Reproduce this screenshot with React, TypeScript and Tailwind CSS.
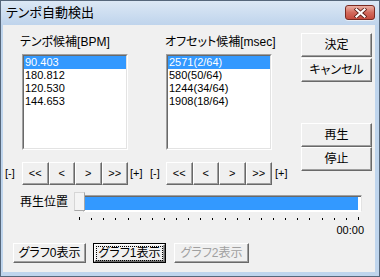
import React from "react";

const Btn = ({
  children,
  className = "",
  disabled = false,
}: {
  children: React.ReactNode;
  className?: string;
  disabled?: boolean;
}) => (
  <div
    className={`flex items-center justify-center bg-[#f0f0f0] border border-t-white border-l-white border-r-[#696969] border-b-[#696969] shadow-[inset_-1px_-1px_0_#a0a0a0] ${
      disabled ? "text-[#a0a0a0]" : "text-black"
    } ${className}`}>
    {children}
  </div>
);

const ListBox = ({ items }: { items: string[] }) => (
  <div className="w-[106px] h-[96px] border border-t-[#a0a0a0] border-l-[#a0a0a0] border-r-white border-b-white">
    <div className="w-full h-full bg-white border border-t-[#696969] border-l-[#696969] border-r-[#e3e3e3] border-b-[#e3e3e3] text-[11px]">
      {items.map((it, i) => (
        <div
          key={it}
          className={`h-[13px] leading-[13px] pl-[1px] ${
            i === 0 ? "bg-[#3399ff] text-white" : "text-black"
          }`}>
          {it}
        </div>
      ))}
    </div>
  </div>
);

const NavGroup = () => (
  <div className="grid grid-cols-4 w-[106px] h-[23px] text-[11px]">
    <Btn>&lt;&lt;</Btn>
    <Btn>&lt;</Btn>
    <Btn>&gt;</Btn>
    <Btn>&gt;&gt;</Btn>
  </div>
);

export default function App() {
  const ticks = Array.from({ length: 24 }, (_, i) => i);

  return (
    <div className="w-[380px] h-[277px] flex flex-col border border-[#56677b] bg-[#bfd5ed] text-black overflow-hidden font-['Liberation_Sans','Noto_Sans_CJK_JP',sans-serif] [font-feature-settings:'palt']">
      {/* title bar */}
      <div className="h-[24px] flex items-start justify-between pl-[5px] pr-[4px] bg-linear-to-b from-[#dce8f5] to-[#bfd4ec]">
        <span className="mt-[4px] text-[13px] leading-[16px]">テンポ自動検出</span>
        <div className="mt-[4px] w-[30px] h-[15px] rounded-[3px] border border-[#7a2a22] bg-linear-to-b from-[#eab0a4] via-[#d36b5e] to-[#c54b3e] flex items-center justify-center shadow-[0_1px_0_#e8eef6]">
          <svg width="13" height="10" viewBox="0 0 13 10">
            <path d="M2.5 1.5 L10.5 8.5 M10.5 1.5 L2.5 8.5" stroke="#5b1e17" strokeWidth="3.8" strokeLinecap="square" />
            <path d="M2.5 1.5 L10.5 8.5 M10.5 1.5 L2.5 8.5" stroke="#ffffff" strokeWidth="2.2" strokeLinecap="square" />
          </svg>
        </div>
      </div>

      {/* client area */}
      <div className="flex-1 ml-[2px] mr-[4px] mb-[4px] bg-[#f0f0f0] flex flex-col text-[12px]">
        <div className="flex h-[160px]">
          <div className="w-[298px] flex flex-col">
            <div className="flex pt-[10px] h-[24px] leading-[14px]">
              <span className="pl-[17px] w-[162px]">テンポ候補[BPM]</span>
              <span>オフセット候補[msec]</span>
            </div>
            <div className="flex pl-[19px] gap-[38px] mt-[5px]">
              <ListBox items={["90.403", "180.812", "120.530", "144.653"]} />
              <ListBox items={["2571(2/64)", "580(50/64)", "1244(34/64)", "1908(18/64)"]} />
            </div>
            <div className="flex items-center mt-[12px] h-[23px] text-[11px]">
              <span className="ml-[2px] w-[17px]">[-]</span>
              <NavGroup />
              <span className="ml-[2px] w-[20px]">[+]</span>
              <span className="w-[16px]">[-]</span>
              <NavGroup />
              <span className="ml-[3px]">[+]</span>
            </div>
          </div>
          <div className="w-[71px] flex flex-col pt-[8px]">
            <Btn className="h-[24px]">決定</Btn>
            <Btn className="h-[24px] mt-[1px]">キャンセル</Btn>
            <Btn className="h-[24px] mt-[41px]">再生</Btn>
            <Btn className="h-[24px]">停止</Btn>
          </div>
        </div>

        {/* playback position */}
        <div className="flex items-center h-[20px] mt-[7px]">
          <span className="ml-[17px] w-[54px]">再生位置</span>
          <div className="relative w-[288px] h-[20px]">
            <div className="ml-[9px] mt-[3px] w-[279px] h-[17px] bg-white border border-t-[#a0a0a0] border-l-[#a0a0a0] border-r-[#e3e3e3] border-b-white">
              <div className="w-full h-full border-t border-l border-[#696969] pr-[3px] pb-[1px]">
                <div className="w-full h-full bg-[#3399ff]" />
              </div>
            </div>
            <div className="absolute left-0 top-0 w-[11px] h-[19px] bg-[#f4f4f4] border border-[#d6d6d6] border-r-[#a8a8a8] border-b-[#a8a8a8]" />
          </div>
        </div>
        <div className="flex justify-between items-start ml-[76px] w-[280px] h-[3px] mt-[5px]">
          {ticks.map((i) => (
            <div
              key={i}
              className={`w-[1px] bg-black ${i === 0 || i === 23 ? "h-[3px]" : "h-[2px] mt-[1px]"}`}
            />
          ))}
        </div>
        <div className="mt-[4px] text-right pr-[11px] leading-[12px] text-[11px]">00:00</div>

        {/* graph buttons */}
        <div className="flex gap-[7px] pl-[10px] mt-[7px]">
          <Btn className="w-[73px] h-[20px]">グラフ0表示</Btn>
          <div className="w-[73px] h-[20px] border border-black flex">
            <Btn className="flex-1">
              <span className="px-[2px] border border-dotted border-black leading-[13px]">グラフ1表示</span>
            </Btn>
          </div>
          <Btn className="w-[75px] h-[20px] ml-[1px]" disabled>
            グラフ2表示
          </Btn>
        </div>
      </div>
    </div>
  );
}
